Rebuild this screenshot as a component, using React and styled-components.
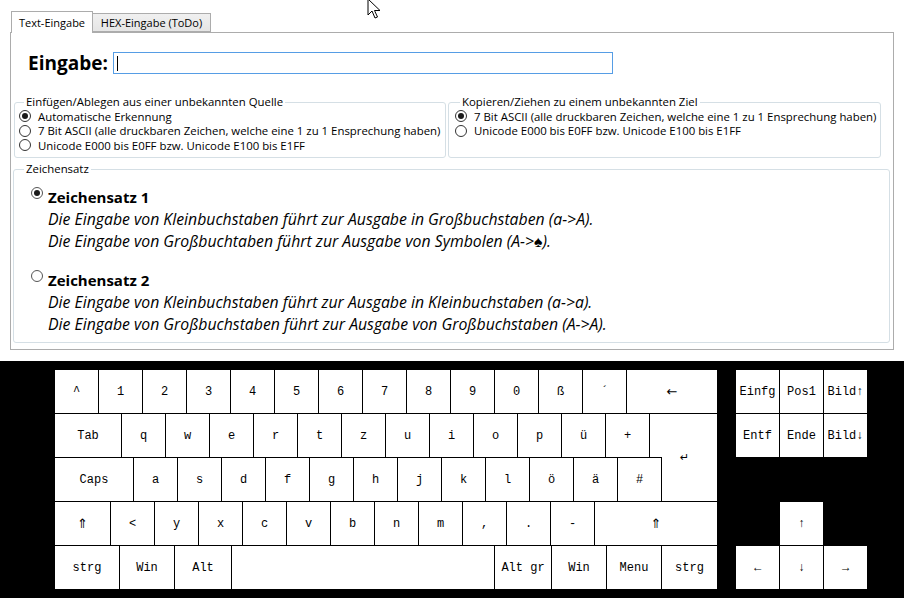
import React from "react";
import styled, { createGlobalStyle } from "styled-components";

const GlobalStyle = createGlobalStyle`
  html, body {
    margin: 0;
    padding: 0;
    background: #fff;
  }
  body {
    font-family: "Open Sans", "Noto Sans", sans-serif;
    color: #000;
  }
`;

const Page = styled.div`
  position: relative;
  width: 904px;
  height: 598px;
  display: flex;
  flex-direction: column;
  overflow: hidden;
`;

const TopArea = styled.div`
  height: 361px;
  box-sizing: border-box;
  padding: 11px 10px 0 10px;
`;

const TabStrip = styled.div`
  display: flex;
  align-items: flex-end;
  height: 21px;
  padding-left: 1px;
`;

const Tab = styled.div`
  position: relative;
  box-sizing: border-box;
  display: flex;
  align-items: center;
  justify-content: center;
  height: ${(p) => (p.$active ? "22px" : "19px")};
  margin-bottom: ${(p) => (p.$active ? "-1px" : "0")};
  width: ${(p) => p.$width}px;
  border: 1px solid #acacac;
  border-bottom: ${(p) => (p.$active ? "none" : "1px solid #acacac")};
  border-left: ${(p) => (p.$active ? "1px solid #acacac" : "none")};
  background: ${(p) => (p.$active ? "#fff" : "linear-gradient(#f0f0f0, #e5e5e5)")};
  font-size: 11px;
  padding-bottom: ${(p) => (p.$active ? "1px" : "0")};
  z-index: ${(p) => (p.$active ? 1 : 0)};
`;

const Panel = styled.div`
  box-sizing: border-box;
  height: 318px;
  border: 1px solid #acacac;
  display: flex;
  flex-direction: column;
`;

const InputRow = styled.div`
  display: flex;
  align-items: center;
  gap: 5px;
  padding: 18px 0 0 17px;
`;

const InputLabel = styled.div`
  font-size: 19px;
  font-weight: 700;
  line-height: 24px;
`;

const TextBox = styled.div`
  box-sizing: border-box;
  width: 500px;
  height: 22px;
  border: 1px solid #569de5;
  display: flex;
  align-items: center;
  padding-left: 3px;
`;

const Caret = styled.span`
  width: 1px;
  height: 15px;
  background: #000;
`;

const GroupRow = styled.div`
  display: flex;
  gap: 2px;
  padding-left: 3px;
  margin-top: 20px;
`;

const Group = styled.fieldset`
  box-sizing: border-box;
  margin: 0;
  min-width: 0;
  width: ${(p) => p.$width}px;
  height: ${(p) => p.$height}px;
  padding: 0 0 0 ${(p) => p.$pad ?? 4}px;
  border: 1px solid #d5dfe5;
  border-radius: 3px;
`;

const Legend = styled.legend`
  padding: 0 2px;
  margin-left: ${(p) => p.$offset || 5}px;
  font-size: 11.4px;
  line-height: 14px;
`;

const RadioRow = styled.label`
  display: flex;
  align-items: center;
  gap: 7px;
  height: 14.5px;
  font-size: 11.4px;
  white-space: nowrap;
`;

const Radio = styled.span`
  position: relative;
  flex-shrink: 0;
  box-sizing: border-box;
  width: 12px;
  height: 12px;
  border: 1px solid #333;
  border-radius: 50%;
  background: #fff;
  &::after {
    content: "";
    display: ${(p) => (p.$checked ? "block" : "none")};
    position: absolute;
    left: 2px;
    top: 2px;
    width: 6px;
    height: 6px;
    border-radius: 50%;
    background: #1a1a1a;
  }
`;

const CharsetGroup = styled(Group)`
  margin: 4px 0 0 2px;
`;

const Option = styled.div`
  display: grid;
  grid-template-columns: 12px 1fr;
  column-gap: 5px;
  padding-left: 13px;
  margin-top: ${(p) => p.$top}px;
  ${Radio} {
    margin-top: 1px;
    border-color: #555;
  }
`;

const OptionTitle = styled.div`
  font-size: 15px;
  font-weight: 700;
  line-height: 22px;
`;

const OptionText = styled.div`
  grid-column: 2;
  font-size: 15.8px;
  font-style: italic;
  line-height: 22px;
  white-space: nowrap;
`;

const Keyboard = styled.div`
  flex: 1;
  background: #000;
  display: flex;
  gap: 19px;
  padding: 9px 0 0 55px;
  font-family: "Liberation Mono", "DejaVu Sans Mono", monospace;
  font-size: 12px;
`;

const MainBlock = styled.div`
  width: 662px;
  display: flex;
  flex-direction: column;
  gap: 1px;
`;

const KeyRow = styled.div`
  display: flex;
  gap: 1px;
  height: 43px;
`;

const MidBlock = styled.div`
  display: flex;
  gap: 1px;
`;

const MidColumn = styled.div`
  width: 606px;
  display: flex;
  flex-direction: column;
  gap: 1px;
`;

const Key = styled.div`
  flex-shrink: 0;
  box-sizing: border-box;
  width: ${(p) => p.$w || 43}px;
  height: ${(p) => p.$h || 43}px;
  background: #fff;
  display: flex;
  align-items: center;
  justify-content: center;
  white-space: pre;
`;

const EnterKey = styled(Key)`
  padding-right: 10px;
`;

const Glyph = styled.span`
  font-family: "DejaVu Sans", sans-serif;
  font-size: ${(p) => p.$size || 12}px;
`;

const SideBlock = styled.div`
  display: grid;
  grid-template-columns: repeat(3, 43px);
  grid-auto-rows: 43px;
  gap: 1px;
  align-content: start;
`;

const SideKey = styled(Key)`
  grid-column: ${(p) => p.$col || "auto"};
  grid-row: ${(p) => p.$row || "auto"};
`;

const Cursor = styled.svg`
  position: absolute;
  left: 367px;
  top: -2px;
`;

const row1 = ["^", "1", "2", "3", "4", "5", "6", "7", "8", "9", "0", "ß", "´"];
const row2 = ["q", "w", "e", "r", "t", "z", "u", "i", "o", "p", "ü", "+"];
const row3 = ["a", "s", "d", "f", "g", "h", "j", "k", "l", "ö", "ä", "#"];
const row4 = ["<", "y", "x", "c", "v", "b", "n", "m", ",", ".", "-"];

export default function App() {
  return (
    <Page>
      <GlobalStyle />
      <TopArea>
        <TabStrip>
          <Tab $active $width={82}>Text-Eingabe</Tab>
          <Tab $width={118}>HEX-Eingabe (ToDo)</Tab>
        </TabStrip>
        <Panel>
          <InputRow>
            <InputLabel>Eingabe:</InputLabel>
            <TextBox>
              <Caret />
            </TextBox>
          </InputRow>

          <GroupRow>
            <Group $width={432} $height={63}>
              <Legend>Einfügen/Ablegen aus einer unbekannten Quelle</Legend>
              <RadioRow>
                <Radio $checked />
                Automatische Erkennung
              </RadioRow>
              <RadioRow>
                <Radio />7 Bit ASCII (alle druckbaren Zeichen, welche eine 1 zu 1 Ensprechung haben)
              </RadioRow>
              <RadioRow>
                <Radio />
                Unicode E000 bis E0FF bzw. Unicode E100 bis E1FF
              </RadioRow>
            </Group>
            <Group $width={433} $height={63} $pad={6}>
              <Legend $offset={5}>Kopieren/Ziehen zu einem unbekannten Ziel</Legend>
              <RadioRow>
                <Radio $checked />7 Bit ASCII (alle druckbaren Zeichen, welche eine 1 zu 1 Ensprechung haben)
              </RadioRow>
              <RadioRow>
                <Radio />
                Unicode E000 bis E0FF bzw. Unicode E100 bis E1FF
              </RadioRow>
            </Group>
          </GroupRow>

          <CharsetGroup $width={877} $height={181} $pad={4}>
            <Legend $offset={6}>Zeichensatz</Legend>
            <Option $top={10}>
              <Radio $checked />
              <OptionTitle>Zeichensatz 1</OptionTitle>
              <OptionText>Die Eingabe von Kleinbuchstaben führt zur Ausgabe in Großbuchstaben (a-&gt;A).</OptionText>
              <OptionText>Die Eingabe von Großbuchtaben führt zur Ausgabe von Symbolen (A-&gt;♠).</OptionText>
            </Option>
            <Option $top={17}>
              <Radio />
              <OptionTitle>Zeichensatz 2</OptionTitle>
              <OptionText>Die Eingabe von Kleinbuchstaben führt zur Ausgabe in Kleinbuchstaben (a-&gt;a).</OptionText>
              <OptionText>Die Eingabe von Großbuchstaben führt zur Ausgabe von Großbuchstaben (A-&gt;A).</OptionText>
            </Option>
          </CharsetGroup>
        </Panel>
      </TopArea>

      <Keyboard>
        <MainBlock>
          <KeyRow>
            {row1.map((k) => (
              <Key key={k}>{k}</Key>
            ))}
            <Key $w={90}>
              <Glyph $size={13}>←</Glyph>
            </Key>
          </KeyRow>
          <MidBlock>
            <MidColumn>
              <KeyRow>
                <Key $w={66}>Tab</Key>
                {row2.map((k) => (
                  <Key key={k}>{k}</Key>
                ))}
                <Key $w={12} />
              </KeyRow>
              <KeyRow>
                <Key $w={78}>Caps</Key>
                {row3.map((k) => (
                  <Key key={k}>{k}</Key>
                ))}
              </KeyRow>
            </MidColumn>
            <EnterKey $w={55} $h={87}>
              <Glyph $size={11}>↵</Glyph>
            </EnterKey>
          </MidBlock>
          <KeyRow>
            <Key $w={55}>
              <Glyph $size={13}>⇑</Glyph>
            </Key>
            {row4.map((k) => (
              <Key key={k}>{k}</Key>
            ))}
            <Key $w={122}>
              <Glyph $size={13}>⇑</Glyph>
            </Key>
          </KeyRow>
          <KeyRow>
            <Key $w={64}>strg</Key>
            <Key $w={54}>Win</Key>
            <Key $w={56}>Alt</Key>
            <Key $w={262} />
            <Key $w={56}>Alt gr</Key>
            <Key $w={54}>Win</Key>
            <Key $w={54}>Menu</Key>
            <Key $w={55}>strg</Key>
          </KeyRow>
        </MainBlock>

        <SideBlock>
          <SideKey>Einfg</SideKey>
          <SideKey>Pos1</SideKey>
          <SideKey>Bild↑</SideKey>
          <SideKey>Entf</SideKey>
          <SideKey>Ende</SideKey>
          <SideKey>Bild↓</SideKey>
          <SideKey $col={2} $row={4}>↑</SideKey>
          <SideKey $col={1} $row={5}>←</SideKey>
          <SideKey $col={2} $row={5}>↓</SideKey>
          <SideKey $col={3} $row={5}>→</SideKey>
        </SideBlock>
      </Keyboard>

      <Cursor width="14" height="21" viewBox="0 0 14 21">
        <path
          d="M1 1 L1 17 L5 13 L8 20 L10.5 19 L7.5 12.5 L13 12.5 Z"
          fill="#fff"
          stroke="#000"
          strokeWidth="1"
          strokeLinejoin="round"
        />
      </Cursor>
    </Page>
  );
}
